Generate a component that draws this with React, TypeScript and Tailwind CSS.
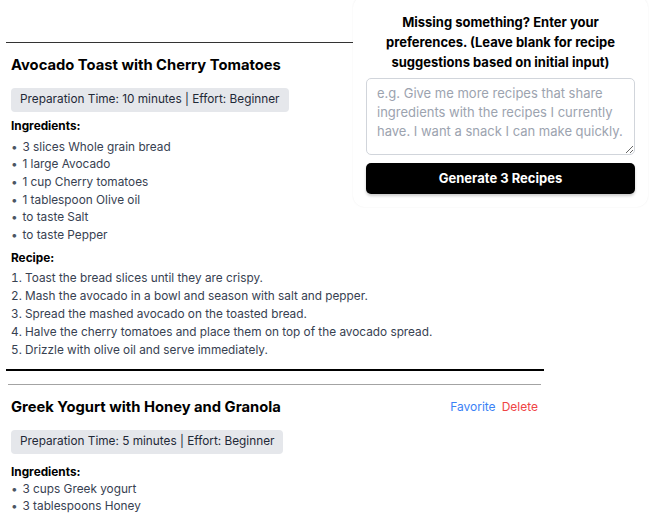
import React from "react";

type Recipe = {
  title: string;
  time: string;
  ingredients: string[];
  steps: string[];
};

const recipes: Recipe[] = [
  {
    title: "Avocado Toast with Cherry Tomatoes",
    time: "10 minutes",
    ingredients: [
      "3 slices Whole grain bread",
      "1 large Avocado",
      "1 cup Cherry tomatoes",
      "1 tablespoon Olive oil",
      "to taste Salt",
      "to taste Pepper",
    ],
    steps: [
      "Toast the bread slices until they are crispy.",
      "Mash the avocado in a bowl and season with salt and pepper.",
      "Spread the mashed avocado on the toasted bread.",
      "Halve the cherry tomatoes and place them on top of the avocado spread.",
      "Drizzle with olive oil and serve immediately.",
    ],
  },
  {
    title: "Greek Yogurt with Honey and Granola",
    time: "5 minutes",
    ingredients: ["3 cups Greek yogurt", "3 tablespoons Honey"],
    steps: [],
  },
];

function Card({ r, first }: { r: Recipe; first?: boolean }) {
  return (
    <div
      className={
        first
          ? "ml-[6px] w-[538px] border-t border-t-[#333] border-b-2 border-b-black pt-[10px] pb-[10px] px-[5px]"
          : "ml-[8px] w-[533px] border-t border-t-[#a3a3a3] mt-[13px] pt-[10px] px-[3px]"
      }
    >
      <div className="flex items-center justify-between">
        <h2 className="text-[14.75px] leading-[24px] font-bold text-black">{r.title}</h2>
        {!first && (
          <div className="flex gap-[6px] text-[12px] leading-[18px]">
            <span className="text-[#3b82f6]">Favorite</span>
            <span className="text-[#ef4444]">Delete</span>
          </div>
        )}
      </div>
      <div className="mt-[11px] inline-block bg-[#e5e7eb] rounded-[4px] px-[9px] py-[3px] text-[11.8px] leading-[17.5px] text-[#1f2937]">
        Preparation Time: {r.time} | Effort: Beginner
      </div>
      <h3
        className={
          (first ? "mt-[5px]" : "mt-[9px]") +
          " text-[11.8px] leading-[18px] font-bold text-black"
        }
      >
        Ingredients:
      </h3>
      <ul
        className={
          (first ? "mt-[4px]" : "mt-0") +
          " text-[11.8px] leading-[17.7px] text-[#374151]"
        }
      >
        {r.ingredients.map((i) => (
          <li key={i} className="flex">
            <span className="inline-block w-[11.5px] text-[#4b5563]">•</span>
            <span>{i}</span>
          </li>
        ))}
      </ul>
      {r.steps.length > 0 && (
        <>
          <h3 className="mt-[4px] text-[11.8px] leading-[18px] font-bold text-black">Recipe:</h3>
          <ol className="mt-[2px] list-decimal list-inside text-[11.8px] leading-[18.1px] text-[#374151]">
            {r.steps.map((s) => (
              <li key={s}>{s}</li>
            ))}
          </ol>
        </>
      )}
    </div>
  );
}

export default function App() {
  return (
    <div
      className="relative w-[649px] h-[518px] overflow-hidden bg-white"
      style={{ fontFamily: "Inter, 'Noto Sans', sans-serif" }}
    >
      <div className="pt-[42px]">
        {recipes.map((r, i) => (
          <Card key={r.title} r={r} first={i === 0} />
        ))}
      </div>
      <div className="absolute left-[353px] top-[-4px] w-[295px] h-[211px] bg-white rounded-[12px] shadow-[0_0_2px_rgba(0,0,0,0.07)] px-[13px] pt-[16px]">
        <p className="text-center text-[13px] leading-[20px] font-bold text-black">
          Missing something? Enter your preferences. (Leave blank for recipe suggestions based on initial input)
        </p>
        <textarea
          className="mt-[6px] block w-full h-[77px] border border-[#d1d5db] rounded-[5px] px-[10px] py-[5px] text-[13px] leading-[19px] placeholder:text-[#9ca3af] resize-y"
          placeholder="e.g. Give me more recipes that share ingredients with the recipes I currently have. I want a snack I can make quickly."
        />
        <button className="mt-[8px] w-full h-[31px] bg-black text-white rounded-[5px] text-[13px] font-bold shadow-[0_2px_3px_rgba(0,0,0,0.2)]">
          Generate 3 Recipes
        </button>
      </div>
    </div>
  );
}
